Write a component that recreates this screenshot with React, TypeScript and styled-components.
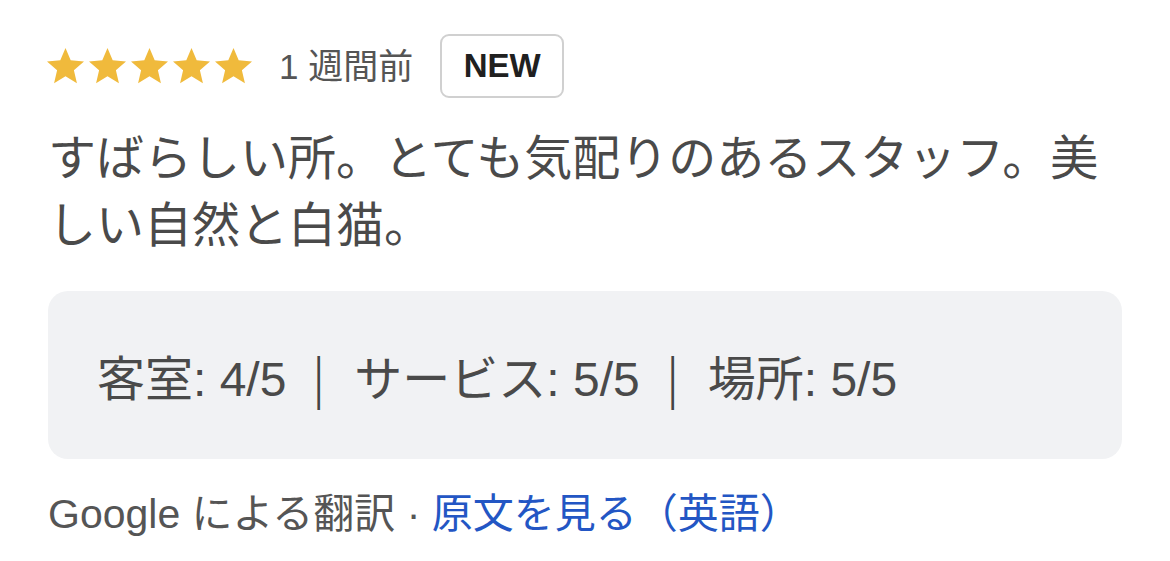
import React from "react";
import styled, { createGlobalStyle } from "styled-components";

const Global = createGlobalStyle`
  html, body { margin: 0; padding: 0; background: #ffffff; }
  body { font-family: "Liberation Sans", "Noto Sans CJK JP", sans-serif; }
`;

const Card = styled.div`
  width: 1170px;
  box-sizing: border-box;
  padding: 34px 48px 0 48px;
  display: flex;
  flex-direction: column;
  color: #4a4a4a;
`;

const Header = styled.div`
  display: flex;
  align-items: center;
  gap: 27px;
  height: 64px;
`;

const Stars = styled.div`
  display: flex;
  gap: 5px;
  margin-left: -1px;
`;

const Ago = styled.span`
  font-size: 35px;
  color: #555555;
  line-height: 1;
`;

const Badge = styled.span`
  box-sizing: border-box;
  height: 64px;
  width: 124px;
  border: 2px solid #d0d0d0;
  border-radius: 9px;
  display: flex;
  align-items: center;
  justify-content: center;
  font-size: 33px;
  font-weight: 700;
  color: #202020;
`;

const Review = styled.p`
  margin: 27px 0 0 0;
  font-size: 48px;
  line-height: 67px;
  color: #4a4a4a;
`;

const Ratings = styled.div`
  margin-top: 32px;
  height: 168px;
  background: #f1f2f4;
  border-radius: 20px;
  display: flex;
  align-items: center;
  padding: 0 49px;
  font-size: 48px;
  color: #4a4a4a;
`;

const Sep = styled.span`
  display: inline-block;
  font-size: 46px;
  padding: 0 30px 0 26px;
  transform: translateY(3px) scaleX(0.7) scaleY(1.25);
  color: #444444;
`;

const Footer = styled.div`
  margin-top: 29px;
  font-size: 41px;
  line-height: 52px;
  color: #555555;
`;

const Link = styled.span`
  color: #2356c4;
`;

const Star = () => (
  <svg width="37" height="35.2" viewBox="2 2 20 19" fill="#f0ba3c">
    <path d="M12 17.27L18.18 21l-1.64-7.03L22 9.24l-7.19-.61L12 2 9.19 8.63 2 9.24l5.46 4.73L5.82 21z" />
  </svg>
);

export default function App() {
  return (
    <>
      <Global />
      <Card>
        <Header>
          <Stars>
            {[0, 1, 2, 3, 4].map((i) => (
              <Star key={i} />
            ))}
          </Stars>
          <Ago>1 週間前</Ago>
          <Badge>NEW</Badge>
        </Header>
        <Review>すばらしい所。とても気配りのあるスタッフ。美しい自然と白猫。</Review>
        <Ratings>
          <span>客室: 4/5</span>
          <Sep>|</Sep>
          <span>サービス: 5/5</span>
          <Sep>|</Sep>
          <span>場所: 5/5</span>
        </Ratings>
        <Footer>
          Google による翻訳 · <Link>原文を見る（英語）</Link>
        </Footer>
      </Card>
    </>
  );
}
